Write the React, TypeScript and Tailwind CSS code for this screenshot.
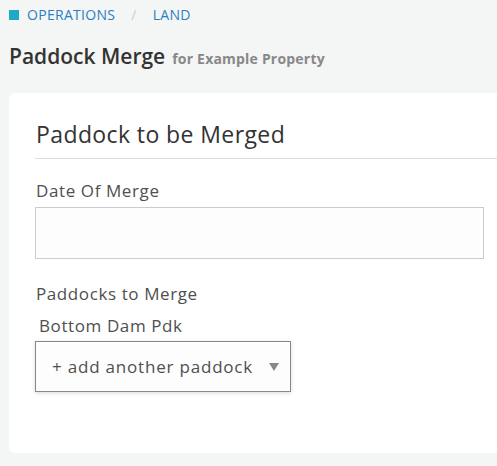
export default function App() {
  return (
    <div className="min-h-[466px] w-[497px] overflow-hidden bg-[#f4f5f5] font-['Open_Sans',sans-serif]">
      <div className="flex items-center pl-[9px] pt-[5px] text-[14px] leading-[20px] tracking-[0.3px] text-[#2a7fc4]">
        <span className="mr-[8px] inline-block h-[10px] w-[10px] bg-[#1fa9c9]" />
        <span>OPERATIONS</span>
        <span className="mx-[16px] text-[#ccc]">/</span>
        <span>LAND</span>
      </div>
      <div className="mt-[17px] flex items-baseline pl-[9px] leading-[28px]">
        <span className="text-[21px] font-semibold text-[#333]">Paddock Merge</span>
        <span className="ml-[7px] text-[14px] font-bold tracking-[0.2px] text-[#888]">for Example Property</span>
      </div>
      <div className="ml-[9px] mt-[20px] h-[360px] w-[500px] rounded-[6px] bg-white pl-[26px] pt-[26px]">
        <div className="pl-px text-[23px] leading-[31px] tracking-[0.4px] text-[#333]">Paddock to be Merged</div>
        <div className="mt-[8px] h-px bg-[#ddd]" />
        <div className="mt-[20px] pl-px text-[17px] leading-[24px] tracking-[0.6px] text-[#4f4f4f]">Date Of Merge</div>
        <div className="mt-[4px] h-[52px] w-[449px] border border-[#ccc] bg-[#fdfdfd]" />
        <div className="mt-[23px] pl-px text-[17px] leading-[24px] tracking-[0.6px] text-[#4f4f4f]">Paddocks to Merge</div>
        <div className="mt-[8px] pl-[4px] text-[17px] leading-[24px] tracking-[0.6px] text-[#4f4f4f]">Bottom Dam Pdk</div>
        <div className="mt-[3px] flex h-[51px] w-[256px] items-center justify-between border border-[#888] bg-[#fdfdfd] pl-[16px] pr-[11px] shadow-[0_1px_4px_rgba(0,0,0,0.15)]">
          <span className="text-[17px] tracking-[0.8px] text-[#4f4f4f]">+ add another paddock</span>
          <svg width="10" height="8" viewBox="0 0 10 8">
            <path d="M0 0 L10 0 L5 8 Z" fill="#888" />
          </svg>
        </div>
      </div>
    </div>
  );
}
